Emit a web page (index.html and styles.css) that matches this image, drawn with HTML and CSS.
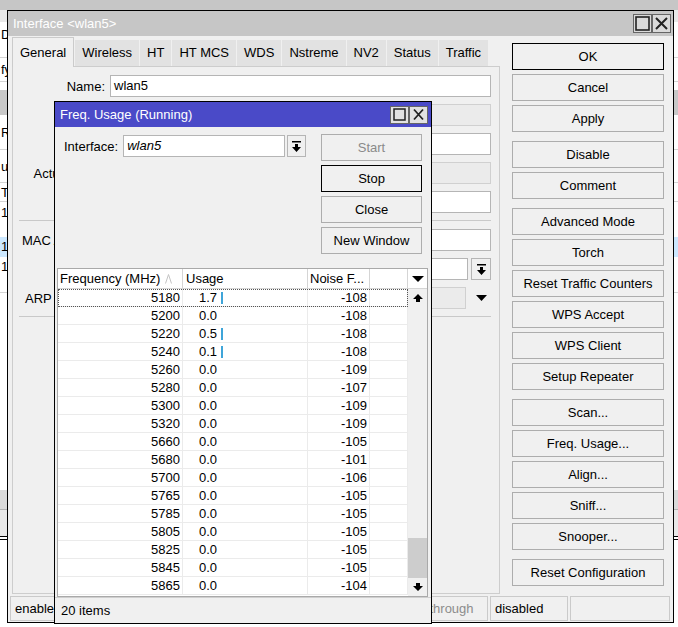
FILE: index.html
```html
<!DOCTYPE html>
<html lang="en">
<head>
    <meta charset="UTF-8">
    <title>Interface &lt;wlan5&gt;</title>
<link rel="stylesheet" href="styles.css">
</head>
<body>
<div class="desk">

    <!-- window that lies behind, only its edges show -->
    <div class="backwin">
        <div class="bw-title"></div>
        <div class="bw-tool"></div>
        <div class="bw-row h26">D</div>
        <div class="bw-row h10 bw-line"></div>
        <div class="bw-row h24 bw-line">fy</div>
        <div class="bw-row h8"></div>
        <div class="bw-row h25 bw-band"></div>
        <div class="bw-row h35 bw-line">R</div>
        <div class="bw-row h33 bw-line">u</div>
        <div class="bw-row h19 bw-line">T</div>
        <div class="bw-row h22">1</div>
        <div class="bw-row h13"></div>
        <div class="bw-row h20 bw-sel">1</div>
        <div class="bw-row h20">1</div>
        <div class="bw-row h16 bw-line"></div>
        <div class="bw-row h197"></div>
        <div class="bw-row h20 bw-foot"></div>
        <div class="bw-row h26 bw-foot2"></div>
    </div>
    <div class="backwin2"></div>

    <!-- Interface window -->
    <div class="win win-main">
        <div class="titlebar">
            <span class="ttl">Interface &lt;wlan5&gt;</span>
            <span class="tbtn"><svg width="15" height="15" viewBox="0 0 15 15"><rect x="1" y="1" width="13" height="13" fill="none" stroke="#222" stroke-width="1.6"/></svg></span>
            <span class="tbtn"><svg width="15" height="15" viewBox="0 0 15 15"><path d="M2 2L13 13M13 2L2 13" stroke="#222" stroke-width="2"/></svg></span>
        </div>
        <div class="main-body">
            <div class="main-cols">
                <div class="tabbox">
                    <div class="tabs">
                        <div class="tab active">General</div>
                        <div class="tab">Wireless</div>
                        <div class="tab">HT</div>
                        <div class="tab">HT MCS</div>
                        <div class="tab">WDS</div>
                        <div class="tab">Nstreme</div>
                        <div class="tab">NV2</div>
                        <div class="tab">Status</div>
                        <div class="tab">Traffic</div>
                    </div>
                    <div class="panel">
                        <div class="frow"><label>Name:</label><div class="field">wlan5</div></div>
                        <div class="frow"><label></label><div class="field ro"></div></div>
                        <div class="frow"><label></label><div class="field"></div></div>
                        <div class="frow"><label>Actual MTU:</label><div class="field ro"></div></div>
                        <div class="frow"><label></label><div class="field"></div></div>
                        <div class="sep"></div>
                        <div class="frow"><label>MAC Address:</label><div class="field"></div></div>
                        <div class="frow"><label></label><div class="field"></div>
                            <div class="ddbtn"><svg width="9" height="11" viewBox="0 0 9 11"><path d="M0 0h9v1.6H0zM3 3h3v3h3l-4.5 5L0 6h3z"/></svg></div>
                        </div>
                        <div class="frow"><label>ARP Timeout:</label><div class="field ro"></div>
                            <div class="ddbtn flat"><svg width="11" height="6" viewBox="0 0 11 6"><path d="M0 0h11L5.5 6z"/></svg></div>
                        </div>
                        <div class="sep"></div>
                    </div>
                </div>
                <div class="btncol">
                    <button class="btn def">OK</button>
                    <button class="btn">Cancel</button>
                    <button class="btn">Apply</button>
                    <button class="btn grp">Disable</button>
                    <button class="btn">Comment</button>
                    <button class="btn grp">Advanced Mode</button>
                    <button class="btn">Torch</button>
                    <button class="btn">Reset Traffic Counters</button>
                    <button class="btn">WPS Accept</button>
                    <button class="btn">WPS Client</button>
                    <button class="btn">Setup Repeater</button>
                    <button class="btn grp">Scan...</button>
                    <button class="btn">Freq. Usage...</button>
                    <button class="btn">Align...</button>
                    <button class="btn">Sniff...</button>
                    <button class="btn">Snooper...</button>
                    <button class="btn grp">Reset Configuration</button>
                </div>
            </div>
            <div class="statusbar">
                <div class="scell w95">enabled</div>
                <div class="scell w96"></div>
                <div class="scell w95"></div>
                <div class="scell w95"></div>
                <div class="scell w89 dim">passthrough</div>
                <div class="scell w78">disabled</div>
                <div class="scell w100"></div>
            </div>
        </div>
    </div>

    <!-- Freq. Usage window -->
    <div class="win win-freq">
        <div class="titlebar active">
            <span class="ttl">Freq. Usage (Running)</span>
            <span class="tbtn"><svg width="13" height="13" viewBox="0 0 13 13"><rect x="1" y="1" width="11" height="11" fill="none" stroke="#222" stroke-width="1.5"/></svg></span>
            <span class="tbtn"><svg width="13" height="13" viewBox="0 0 13 13"><path d="M2 1.5L11 11.5M11 1.5L2 11.5" stroke="#222" stroke-width="1.8"/></svg></span>
        </div>
        <div class="fu-body">
            <div class="fu-top">
                <div class="fu-iface">
                    <label>Interface:</label>
                    <div class="field it">wlan5</div>
                    <div class="ddbtn"><svg width="9" height="11" viewBox="0 0 9 11"><path d="M0 0h9v1.6H0zM3 3h3v3h3l-4.5 5L0 6h3z"/></svg></div>
                </div>
                <div class="fu-btns">
                    <button class="btn dis">Start</button>
                    <button class="btn def">Stop</button>
                    <button class="btn">Close</button>
                    <button class="btn">New Window</button>
                </div>
            </div>
            <div class="grid">
                <div class="grid-main">
                    <div class="ghead">
                        <div class="c c1">Frequency (MHz)<svg class="sort" width="7" height="10" viewBox="0 0 7 10"><path d="M0.5 9.5L3.5 0.5L6.5 9.5" fill="none" stroke="#c4c4c4"/></svg></div>
                        <div class="c c2">Usage</div>
                        <div class="c c3">Noise F...</div>
                        <div class="c c4"></div>
                    </div>
                    <div class="grow focus"><div class="c c1">5180</div><div class="c c2"><span class="val">1.7</span><span class="bar"></span></div><div class="c c3">-108</div><div class="c c4"></div></div>
                    <div class="grow"><div class="c c1">5200</div><div class="c c2"><span class="val">0.0</span></div><div class="c c3">-108</div><div class="c c4"></div></div>
                    <div class="grow"><div class="c c1">5220</div><div class="c c2"><span class="val">0.5</span><span class="bar"></span></div><div class="c c3">-108</div><div class="c c4"></div></div>
                    <div class="grow"><div class="c c1">5240</div><div class="c c2"><span class="val">0.1</span><span class="bar"></span></div><div class="c c3">-108</div><div class="c c4"></div></div>
                    <div class="grow"><div class="c c1">5260</div><div class="c c2"><span class="val">0.0</span></div><div class="c c3">-109</div><div class="c c4"></div></div>
                    <div class="grow"><div class="c c1">5280</div><div class="c c2"><span class="val">0.0</span></div><div class="c c3">-107</div><div class="c c4"></div></div>
                    <div class="grow"><div class="c c1">5300</div><div class="c c2"><span class="val">0.0</span></div><div class="c c3">-109</div><div class="c c4"></div></div>
                    <div class="grow"><div class="c c1">5320</div><div class="c c2"><span class="val">0.0</span></div><div class="c c3">-109</div><div class="c c4"></div></div>
                    <div class="grow"><div class="c c1">5660</div><div class="c c2"><span class="val">0.0</span></div><div class="c c3">-105</div><div class="c c4"></div></div>
                    <div class="grow"><div class="c c1">5680</div><div class="c c2"><span class="val">0.0</span></div><div class="c c3">-101</div><div class="c c4"></div></div>
                    <div class="grow"><div class="c c1">5700</div><div class="c c2"><span class="val">0.0</span></div><div class="c c3">-106</div><div class="c c4"></div></div>
                    <div class="grow"><div class="c c1">5765</div><div class="c c2"><span class="val">0.0</span></div><div class="c c3">-105</div><div class="c c4"></div></div>
                    <div class="grow"><div class="c c1">5785</div><div class="c c2"><span class="val">0.0</span></div><div class="c c3">-105</div><div class="c c4"></div></div>
                    <div class="grow"><div class="c c1">5805</div><div class="c c2"><span class="val">0.0</span></div><div class="c c3">-105</div><div class="c c4"></div></div>
                    <div class="grow"><div class="c c1">5825</div><div class="c c2"><span class="val">0.0</span></div><div class="c c3">-105</div><div class="c c4"></div></div>
                    <div class="grow"><div class="c c1">5845</div><div class="c c2"><span class="val">0.0</span></div><div class="c c3">-105</div><div class="c c4"></div></div>
                    <div class="grow"><div class="c c1">5865</div><div class="c c2"><span class="val">0.0</span></div><div class="c c3">-104</div><div class="c c4"></div></div>
                </div>
                <div class="vscroll">
                    <div class="vs-head"><svg width="12" height="6" viewBox="0 0 12 6"><path d="M0 0h12L6 6z"/></svg></div>
                    <div class="vs-btn"><svg width="10" height="8" viewBox="0 0 10 8"><path d="M5 0l5 5H7v3H3V5H0z"/></svg></div>
                    <div class="vs-track"><div class="vs-thumb"></div></div>
                    <div class="vs-btn"><svg width="10" height="8" viewBox="0 0 10 8"><path d="M3 0h4v3h3L5 8 0 3h3z"/></svg></div>
                </div>
            </div>
            <div class="fu-status">20 items</div>
        </div>
    </div>

</div>
</body>
</html>
```

FILE: styles.css
```css
body {
    margin: 0;
    font-family: "Liberation Sans", Arial, sans-serif;
    font-size: 13px;
    color: #000;
    background: #fff;
}

.desk {
    position: relative;
    width: 678px;
    height: 627px;
    overflow: hidden;
}

/* window in the background */
.backwin {
    position: absolute;
    left: -3px;
    top: -15px;
    width: 684px;
    background: #fff;
    border-bottom: 1px solid #000;
}

.backwin2 {
    position: absolute;
    left: -3px;
    top: 539px;
    width: 684px;
    height: 100px;
    border-top: 1px solid #000;
    background: #fff;
}

.bw-title {
    height: 25px;
    background: #c6c6c6;
}

.bw-tool {
    height: 12px;
    background: #e8e8e8;
}

.bw-row {
    box-sizing: border-box;
    padding-left: 4px;
}

.bw-line { border-bottom: 1px solid #d4d4d4; }
.bw-band { background: #c8c8c8; }
.bw-sel { background: #cce8ff; }
.bw-foot { background: #dadada; border-bottom: 1px solid #b2b2b2; }
.bw-foot2 { background: #e8e8e8; }

.h8 { height: 8px; }
.h10 { height: 10px; }
.h13 { height: 13px; }
.h16 { height: 16px; }
.h19 { height: 19px; line-height: 19px; }
.h20 { height: 20px; line-height: 20px; }
.h22 { height: 22px; line-height: 22px; }
.h24 { height: 24px; line-height: 24px; }
.h25 { height: 25px; }
.h26 { height: 26px; line-height: 26px; }
.h33 { height: 33px; line-height: 33px; }
.h35 { height: 35px; line-height: 35px; }
.h197 { height: 197px; }

/* windows */
.win {
    position: absolute;
    box-sizing: border-box;
    border: 1px solid #000;
    background: #f0f0f0;
    display: flex;
    flex-direction: column;
}

.win-main {
    left: 7px;
    top: 10px;
    width: 667px;
    height: 613px;
}

.win-freq {
    left: 54px;
    top: 101px;
    width: 378px;
    height: 523px;
}

.titlebar {
    flex: none;
    height: 25px;
    display: flex;
    align-items: center;
    padding: 0 2px 0 5px;
    background: #c6c6c6;
    color: #fff;
}

.titlebar.active {
    background: #4a4ac8;
    padding-right: 3px;
}

.ttl {
    flex: 1;
    white-space: nowrap;
}

.tbtn {
    width: 19px;
    height: 19px;
    box-sizing: border-box;
    border: 1px solid #666;
    background: #dadada;
    display: flex;
    align-items: center;
    justify-content: center;
}

.titlebar.active .tbtn {
    height: 18px;
    background: #e2e2e2;
}

/* interface window body */
.main-body {
    flex: 1;
    display: flex;
    flex-direction: column;
    min-height: 0;
}

.main-cols {
    flex: 1;
    display: flex;
    padding-left: 4px;
    min-height: 0;
}

.tabbox {
    width: 488px;
    display: flex;
    flex-direction: column;
    padding-bottom: 2px;
}

.tabs {
    display: flex;
    height: 26px;
    margin-top: 4px;
}

.tab {
    box-sizing: border-box;
    height: 26px;
    line-height: 26px;
    padding: 0 7px;
    margin-right: 1px;
    background: #e2e2e2;
    white-space: nowrap;
}

.tab.active {
    position: relative;
    z-index: 1;
    height: 30px;
    margin-top: -3px;
    padding-top: 2px;
    background: #f0f0f0;
    border: 1px solid #cbcbcb;
    border-bottom: none;
}

.panel {
    flex: 1;
    border: 1px solid #cdcdcd;
    padding: 8px 8px 0 0;
}

.frow {
    display: flex;
    align-items: center;
    height: 22px;
    margin-bottom: 7px;
}

.frow label {
    flex: none;
    width: 92px;
    margin-right: 5px;
    text-align: right;
    white-space: nowrap;
}

.field {
    flex: 1;
    box-sizing: border-box;
    height: 22px;
    line-height: 20px;
    padding: 0 3px;
    background: #fff;
    border: 1px solid #b5b5b5;
    white-space: nowrap;
    overflow: hidden;
}

.field.ro {
    background: #ebebeb;
    border-color: #d0d0d0;
}

.field.it {
    flex: none;
    width: 162px;
    font-style: italic;
}

.ddbtn {
    flex: none;
    box-sizing: border-box;
    width: 20px;
    height: 22px;
    margin-left: 3px;
    border: 1px solid #b5b5b5;
    background: #f0f0f0;
    display: flex;
    align-items: center;
    justify-content: center;
}

.ddbtn.flat {
    border-color: transparent;
    background: none;
    margin-left: 5px;
}

.sep {
    height: 1px;
    margin: 2px 0 8px 6px;
    background: #c9c9c9;
}

.btncol {
    width: 152px;
    margin-left: 12px;
    padding-top: 7px;
}

.btn {
    display: block;
    box-sizing: border-box;
    width: 100%;
    height: 27px;
    margin: 0 0 4px;
    padding: 0;
    font-family: inherit;
    font-size: 13px;
    color: #000;
    background: #f0f0f0;
    border: 1px solid #adadad;
    white-space: nowrap;
}

.btn.def {
    border-color: #000;
}

.btn.dis {
    color: #8a8a8a;
}

/* margins collapse with the 4px above, so the gap is 9px */
.btn.grp {
    margin-top: 9px;
}

.statusbar {
    flex: none;
    display: flex;
    gap: 2px;
    height: 25px;
    padding-left: 2px;
    margin-bottom: 1px;
}

.scell {
    box-sizing: border-box;
    border: 1px solid #cacaca;
    padding-left: 4px;
    line-height: 23px;
    white-space: nowrap;
    overflow: hidden;
}

.scell.dim {
    color: #8c8c8c;
    padding-left: 2px;
}

.w78 { width: 78px; }
.w89 { width: 89px; }
.w95 { width: 95px; }
.w96 { width: 96px; }
.w100 { width: 100px; }

/* freq usage window */
.fu-body {
    flex: 1;
    display: flex;
    flex-direction: column;
    min-height: 0;
}

.fu-top {
    display: flex;
    padding: 7px 9px 0 9px;
}

.fu-iface {
    display: flex;
    align-items: center;
    height: 22px;
    margin-top: 1px;
}

.fu-iface label {
    margin-right: 5px;
}

.fu-iface .ddbtn {
    width: 19px;
    margin-left: 2px;
}

.fu-btns {
    margin-left: auto;
    width: 101px;
}

.fu-btns .btn:last-child {
    margin-bottom: 0;
}

.grid {
    flex: 1;
    min-height: 0;
    display: flex;
    margin: 14px 3px 0 2px;
    border: 1px solid #a9a9a9;
    background: #fff;
}

.grid-main {
    width: 350px;
    overflow: hidden;
}

.ghead,
.grow {
    display: flex;
    box-sizing: border-box;
}

.ghead {
    height: 20px;
    border-bottom: 1px solid #d5d5d5;
}

.grow {
    height: 18px;
    border-bottom: 1px solid #ebebeb;
}

.grow.focus {
    outline: 1px dotted #555;
    outline-offset: -1px;
}

.c {
    box-sizing: border-box;
    border-right: 1px solid #ebebeb;
    line-height: 17px;
    white-space: nowrap;
    overflow: hidden;
}

.c1 { width: 125px; text-align: right; padding-right: 2px; }
.c2 { width: 125px; display: flex; align-items: center; }
.c3 { width: 62px; text-align: right; padding-right: 2px; }
.c4 { width: 38px; }

.ghead .c {
    border-right-color: #d5d5d5;
    line-height: 19px;
    text-align: left;
    padding-left: 2px;
}

.ghead .c1 {
    display: flex;
    align-items: center;
}

.ghead .c2 {
    padding-left: 3px;
}

.sort {
    margin-left: auto;
    margin-right: 8px;
}

.val {
    width: 34px;
    text-align: right;
}

.bar {
    width: 2px;
    height: 12px;
    margin-left: 4px;
    background: #3fa5d9;
}

.vscroll {
    width: 19px;
    display: flex;
    flex-direction: column;
    background: #f0f0f0;
}

.vs-head {
    box-sizing: border-box;
    height: 20px;
    background: #fff;
    border-bottom: 1px solid #d5d5d5;
    display: flex;
    align-items: center;
    justify-content: center;
}

.vs-btn {
    height: 18px;
    display: flex;
    align-items: center;
    justify-content: center;
}

.vs-track {
    flex: 1;
    display: flex;
    flex-direction: column;
    justify-content: flex-end;
}

.vs-thumb {
    height: 40px;
    background: #cdcdcd;
}

.fu-status {
    flex: none;
    height: 26px;
    box-sizing: border-box;
    border-top: 1px solid #cfcfcf;
    padding-left: 6px;
    line-height: 25px;
}
```
